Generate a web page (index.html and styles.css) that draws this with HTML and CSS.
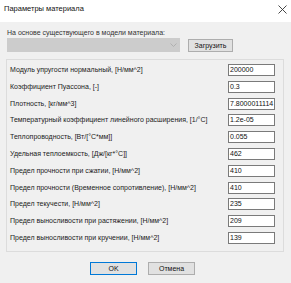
FILE: index.html
```html
<!DOCTYPE html>
<html lang="ru">
<head>
<meta charset="utf-8">
<title>Параметры материала</title>
<link rel="stylesheet" href="styles.css">
</head>
<body>
<div class="window">
  <div class="titlebar">
    <span class="title">Параметры материала</span>
    <svg class="close" width="9" height="9" viewBox="0 0 9 9"><path d="M0.5 0.5L8.5 8.5M8.5 0.5L0.5 8.5" stroke="#333" stroke-width="0.9" fill="none"/></svg>
  </div>
  <div class="body">
    <div class="based-label">На основе существующего в модели материала:</div>
    <div class="combo-row">
      <div class="combo">
        <svg class="chev" width="7" height="4" viewBox="0 0 7 4"><path d="M0.5 0.5L3.5 3.5L6.5 0.5" stroke="#a8a8a8" stroke-width="0.8" fill="none"/></svg>
      </div>
      <div class="btn load">Загрузить</div>
    </div>
    <div class="group">
      <div class="row"><span class="lbl">Модуль упругости нормальный, [Н/мм^2]</span><span class="inp">200000</span></div>
      <div class="row"><span class="lbl">Коэффициент Пуассона, [-]</span><span class="inp">0.3</span></div>
      <div class="row"><span class="lbl">Плотность, [кг/мм^3]</span><span class="inp">7.8000011114</span></div>
      <div class="row"><span class="lbl">Температурный коэффициент линейного расширения, [1/°C]</span><span class="inp">1.2e-05</span></div>
      <div class="row"><span class="lbl">Теплопроводность, [Вт/[°C*мм]]</span><span class="inp">0.055</span></div>
      <div class="row"><span class="lbl">Удельная теплоемкость, [Дж/[кг*°C]]</span><span class="inp">462</span></div>
      <div class="row"><span class="lbl">Предел прочности при сжатии, [Н/мм^2]</span><span class="inp">410</span></div>
      <div class="row"><span class="lbl">Предел прочности (Временное сопротивление), [Н/мм^2]</span><span class="inp">410</span></div>
      <div class="row"><span class="lbl">Предел текучести, [Н/мм^2]</span><span class="inp">235</span></div>
      <div class="row"><span class="lbl">Предел выносливости при растяжении, [Н/мм^2]</span><span class="inp">209</span></div>
      <div class="row"><span class="lbl">Предел выносливости при кручении, [Н/мм^2]</span><span class="inp">139</span></div>
    </div>
    <div class="footer">
      <div class="btn ok">OK</div>
      <div class="btn cancel">Отмена</div>
    </div>
  </div>
</div>
</body>
</html>
```

FILE: styles.css
```css
html, body {
  margin: 0;
  padding: 0;
}
body {
  width: 291px;
  height: 283px;
  overflow: hidden;
  background: #f0f0f0;
  font-family: "Liberation Sans", Arial, sans-serif;
  color: #000;
}
.window {
  display: flex;
  flex-direction: column;
  height: 283px;
}
.titlebar {
  height: 22px;
  background: #fff;
  display: flex;
  align-items: flex-start;
  justify-content: space-between;
  padding: 4px 4px 0 4px;
  box-sizing: border-box;
}
.title {
  font-size: 7.5px;
  line-height: 10px;
  color: #111;
}
.close {
  margin-top: 1px;
  margin-right: 0;
}
.body {
  padding: 0 7px 0 6px;
  display: flex;
  flex-direction: column;
}
.based-label {
  font-size: 7px;
  line-height: 9px;
  margin-top: 6px;
  padding-left: 1px;
  color: #333;
}
.combo-row {
  display: flex;
  align-items: flex-start;
  margin-top: 1px;
  padding-left: 1px;
}
.combo {
  width: 173px;
  height: 14px;
  background: #cccccc;
  box-sizing: border-box;
  display: flex;
  align-items: center;
  justify-content: flex-end;
  padding-right: 3px;
}
.btn {
  box-sizing: border-box;
  background: #e1e1e1;
  border: 1px solid #adadad;
  font-size: 7px;
  display: flex;
  align-items: center;
  justify-content: center;
  color: #111;
}
.load {
  margin-left: 8px;
  margin-top: 1px;
  width: 45px;
  height: 13px;
}
.group {
  margin-top: 7px;
  border: 1px solid #dcdcdc;
  height: 193px;
  box-sizing: border-box;
  padding: 4px 8px 0 3px;
  display: grid;
  grid-auto-rows: 16.8px;
}
.row {
  display: flex;
  justify-content: space-between;
  align-items: flex-start;
}
.lbl {
  font-size: 7px;
  line-height: 12px;
  color: #222;
  white-space: nowrap;
}
.inp {
  width: 47px;
  height: 12px;
  box-sizing: border-box;
  background: #fff;
  border: 1px solid #7a7a7a;
  font-size: 7px;
  line-height: 10px;
  padding-left: 1px;
  overflow: hidden;
  white-space: nowrap;
  color: #111;
}
.footer {
  display: flex;
  justify-content: center;
  gap: 11px;
  margin-top: 10px;
  padding-right: 5px;
}
.ok, .cancel {
  width: 47px;
  height: 13px;
}
.ok {
  border-color: #0078d7;
}
```
